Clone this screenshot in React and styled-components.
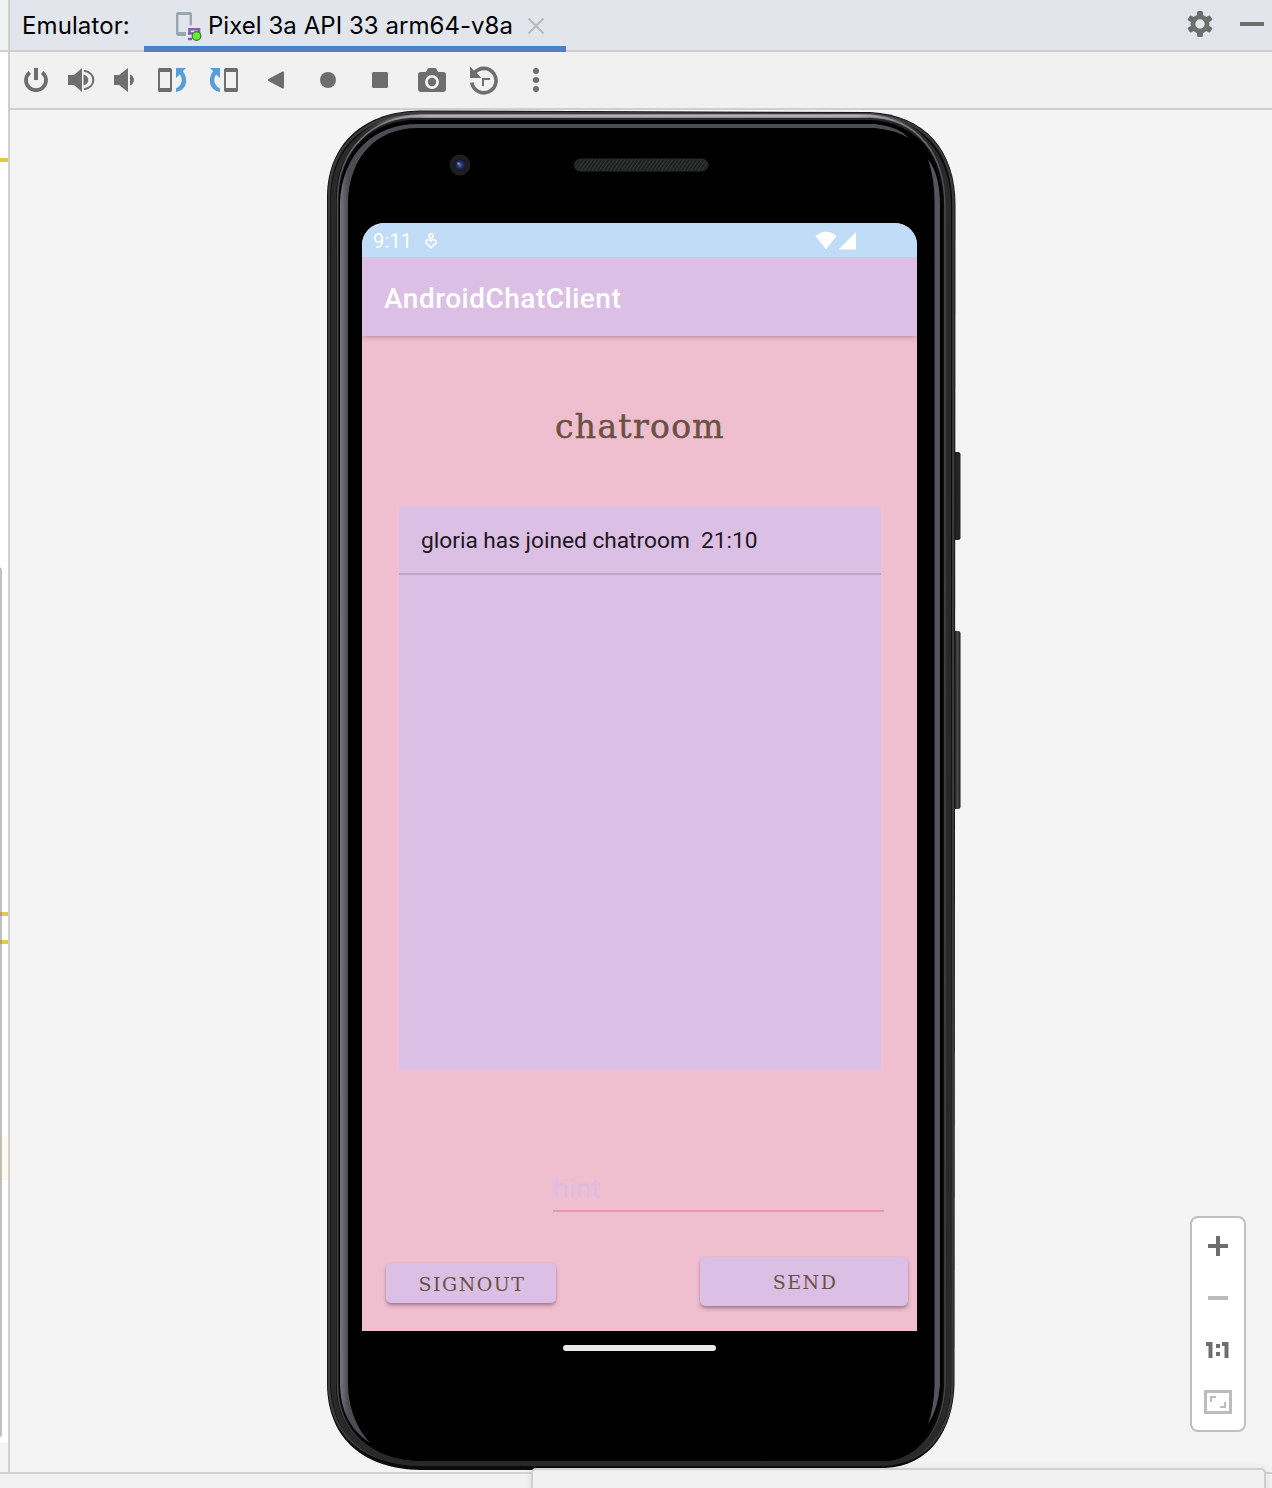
import React from "react";
import styled, { createGlobalStyle } from "styled-components";

const Global = createGlobalStyle`
  body { margin: 0; background: #f4f4f4; overflow: hidden; }
  *, *::before, *::after { box-sizing: border-box; }
  svg { display: block; }
`;

const Window = styled.div`
  position: relative;
  width: 1272px;
  height: 1488px;
  overflow: hidden;
  display: flex;
  flex-direction: column;
  background: #f4f4f4;
  font-family: Inter, "Liberation Sans", sans-serif;
`;
const Workspace = styled.div`
  display: flex;
  height: 1472px;
`;
const StatusStrip = styled.div`
  height: 16px;
  border-top: 2px solid #d1d1d1;
  background: #f2f2f2;
`;
const Popup = styled.div`
  position: absolute;
  left: 531px;
  top: 1468px;
  width: 735px;
  height: 40px;
  border: 2px solid #cfcfcf;
  border-radius: 5px;
  background: #f1f1f1;
  box-shadow: 0 0 8px rgba(0, 0, 0, 0.08);
`;

const EditorEdge = styled.div`
  position: relative;
  width: 10px;
  border-right: 2px solid #cfcfcf;
  background: #f4f4f4;
  display: flex;
  flex-direction: column;
`;
const EdgeTop = styled.div`
  height: 52px;
  border-bottom: 2px solid #cfcfcf;
  background: #f2f2f2;
`;
const EdgeGutter = styled.div`
  display: flow-root;
  height: 1391px;
  background: #fff;
`;
const Mark = styled.div`
  height: ${(p) => p.$height}px;
  margin-top: ${(p) => p.$gap}px;
  background: ${(p) => p.$color};
`;
const ScrollThumb = styled.div`
  position: absolute;
  left: -6px;
  top: 567px;
  width: 8px;
  height: 871px;
  border-radius: 4px;
  background: rgba(130, 130, 130, 0.5);
`;

const Panel = styled.div`
  flex: 1;
  display: flex;
  flex-direction: column;
`;
const Header = styled.div`
  display: flex;
  height: 52px;
  border-bottom: 2px solid #cfcfcf;
  background: #e2e6ec;
  font-size: 24px;
  line-height: 52px;
  color: #000;
  white-space: pre;
`;
const HeaderLabel = styled.div`
  width: 134px;
  padding-left: 12px;
  letter-spacing: 0.1px;
`;
const Tab = styled.div`
  display: flex;
  width: 422px;
  height: 52px;
  padding-left: 30px;
  border-bottom: 6px solid #4f7fc5;
`;
const TabIcon = styled.div`
  width: 34px;
  padding-top: 10px;
`;
const TabTitle = styled.div`
  width: 319px;
  letter-spacing: 0.04px;
`;
const TabClose = styled.div`
  padding-top: 17px;
`;
const HeaderActions = styled.div`
  display: flex;
  margin-left: auto;
  gap: 24px;
  padding: 10px 6px 0 0;
`;
const Toolbar = styled.div`
  display: flex;
  align-items: center;
  height: 58px;
  padding-left: 4px;
  border-bottom: 2px solid #cfcfcf;
  background: #f1f1f1;
`;
const ToolButton = styled.div`
  display: flex;
  justify-content: center;
  width: ${(p) => p.$width || 52}px;
`;
const Canvas = styled.div`
  flex: 1;
  display: flex;
  padding-left: 316px;
`;

const Phone = styled.div`
  position: relative;
  width: 636px;
  height: 1362px;
  padding: 113px 0 0 36px;
`;
const Shell = styled.svg`
  position: absolute;
  left: 0;
  top: 0;
`;
const Screen = styled.div`
  position: relative;
  width: 555px;
  height: 1108px;
  border-radius: 22px 22px 0 0;
  overflow: hidden;
  display: flex;
  flex-direction: column;
  background: #efbfcf;
  font-family: Roboto, "Liberation Sans", sans-serif;
`;
const StatusBar = styled.div`
  display: flex;
  align-items: center;
  height: 34px;
  padding: 1px 60px 0 11px;
  background: #c1dcf7;
  color: #fff;
  font-size: 20px;
`;
const Clock = styled.span`
  width: 51px;
  padding-top: 1px;
  letter-spacing: 0.15px;
`;
const Signals = styled.div`
  margin-left: auto;
`;
const AppBar = styled.div`
  height: 79px;
  padding: 1px 0 0 22px;
  background: #dbbfe4;
  color: #fff;
  font-size: 28px;
  font-weight: 500;
  line-height: 81px;
  letter-spacing: 0.5px;
  box-shadow: 0 1px 5px rgba(90, 40, 70, 0.38);
  clip-path: inset(0 0 -10px 0);
  z-index: 1;
`;
const Heading = styled.h1`
  margin: 66px 0 0;
  height: 104px;
  padding-left: 1px;
  font: 400 33px/50px "DejaVu Serif", serif;
  letter-spacing: 1.3px;
  -webkit-text-stroke: 0.5px #6c5044;
  text-align: center;
  color: #6c5044;
`;
const MessageList = styled.div`
  width: 482px;
  height: 564px;
  margin-left: 36.5px;
  background: #dbbfe4;
`;
const Message = styled.div`
  height: 69px;
  padding-left: 22.5px;
  border-bottom: 2px solid #bfa7c8;
  font-size: 22.7px;
  line-height: 69px;
  color: #1d1720;
  white-space: pre;
`;
const HintField = styled.div`
  width: 331px;
  height: 44px;
  margin: 98px 0 0 191px;
  border-bottom: 2px solid #e995b4;
  font-size: 28px;
  line-height: 41px;
  color: #dbbfe4;
`;
const Actions = styled.div`
  display: flex;
  align-items: center;
  justify-content: space-between;
  margin-top: 45px;
  padding: 0 9px 0 24px;
`;
const ActionButton = styled.div`
  display: flex;
  align-items: center;
  justify-content: center;
  width: ${(p) => p.$width}px;
  height: ${(p) => p.$height}px;
  margin-top: ${(p) => p.$drop || 0}px;
  padding: 1px 0 0 2px;
  border-radius: 5px;
  background: #dbbfe4;
  box-shadow: 0 3px 4px -1px rgba(80, 40, 70, 0.45), 0 1px 3px rgba(80, 40, 70, 0.15);
  font-family: "DejaVu Serif", serif;
  font-size: 19px;
  letter-spacing: 1.5px;
  color: #6c5044;
`;
const NavPill = styled.div`
  position: relative;
  width: 153px;
  height: 6px;
  margin: 14px 0 0 201px;
  border-radius: 3px;
  background: #e9e9e9;
`;

const ZoomPanel = styled.div`
  align-self: flex-end;
  display: flex;
  flex-direction: column;
  align-items: center;
  justify-content: space-around;
  width: 56px;
  height: 216px;
  margin: 0 26px 40px auto;
  padding: 2px 0;
  border: 2px solid #bfbfbf;
  border-radius: 8px;
  background: #fff;
`;
const ZoomButton = styled.div`
  display: flex;
  align-items: center;
  justify-content: center;
  height: 52px;
`;

const G = "#6e6e6e";
const Icon = ({ children, size = 32 }) => (
  <svg width={size} height={size} viewBox={`${-size / 2} ${-size / 2} ${size} ${size}`} fill={G}>
    {children}
  </svg>
);

const PowerIcon = () => (
  <Icon>
    <path d="M-6.2-7.6A10 10 0 1 0 6.2-7.6" fill="none" stroke={G} strokeWidth="3.8" />
    <rect x="-2" y="-12" width="4" height="12" />
  </Icon>
);
const VolumeUpIcon = () => (
  <Icon>
    <path d="M-13-5H-7L1-12V12L-7 5H-13ZM2.5-5.5C9-4 9 4 2.5 5.5Z" />
    <path d="M3-9.2C15.5-7.5 15.5 7.5 3 9.2" fill="none" stroke={G} strokeWidth="2" />
  </Icon>
);
const VolumeDownIcon = () => (
  <Icon>
    <path d="M-11-5H-6L3-12V12L-6 5H-11ZM5-5.5C10.300-4 10.300 4 5 5.500Z" />
  </Icon>
);
const RotateIcon = ({ right }) => (
  <Icon>
    <g transform={right ? "scale(-1 1)" : undefined}>
      <path fillRule="evenodd" d="M-12.500-12H-1.500Q0-12 0-10.500V10.500Q0 12-1.500 12H-12.500Q-14 12-14 10.500V-10.500Q-14-12-12.500-12ZM-12-8V8H-2V-8Z" />
      <path fill="#549fd7" d="M4-12H14L10.800-8.700C16.500-2 15.500 10.500 4 12V8.500C10.500 5.500 11-1.500 7.800-5.600L4-2Z" />
    </g>
  </Icon>
);
const BackIcon = () => (
  <Icon>
    <path d="M-7.200 0L7-7.500V7.500Z" stroke={G} strokeWidth="2" strokeLinejoin="round" />
  </Icon>
);
const HomeIcon = () => (
  <Icon>
    <circle r="8" />
  </Icon>
);
const OverviewIcon = () => (
  <Icon>
    <rect x="-8" y="-8" width="16" height="16" rx="1.300" />
  </Icon>
);
const CameraIcon = () => (
  <Icon>
    <path fillRule="evenodd" d="M-5-10Q-4.500-12-3-12H3Q4.500-12 5-10L6-8H11Q14-8 14-5V9Q14 12 11 12H-11Q-14 12-14 9V-5Q-14-8-11-8H-6ZM0-5A7 7 0 1 0 0 9A7 7 0 1 0 0-5Z" />
    <circle cy="2" r="4.200" />
  </Icon>
);
const HistoryIcon = () => (
  <Icon>
    <path d="M-9.300-7.500A12.200 12.200 0 1 1-12.200 2.500" fill="none" stroke={G} strokeWidth="3.600" />
    <path d="M-14-13.500V-2H-2.500Z" />
    <path d="M-2-2H6V0H0V6H-2Z" />
  </Icon>
);
const MoreIcon = () => (
  <Icon>
    <circle cy="-9" r="3" />
    <circle r="3" />
    <circle cy="9" r="3" />
  </Icon>
);
const GearIcon = () => (
  <Icon size={28}>
    {[0, 60, 120].map((a) => (
      <rect key={a} x="-3" y="-13" width="6" height="26" rx="1.500" transform={`rotate(${a})`} />
    ))}
    <circle r="7" fill="none" stroke={G} strokeWidth="5" />
    <circle r="4.700" fill="#e2e6ec" />
  </Icon>
);
const DeviceIcon = () => (
  <svg width="28" height="32" viewBox="0 0 28 32">
    <path d="M12 26H4Q2 26 2 24V4Q2 2 4 2H16Q18 2 18 4V15.500H15.500V5H4.500V22H12Z" fill="#9aa7b0" />
    <path d="M15.500 24V19.300H25V25M14 23.500H21M14 29H18" fill="none" stroke="#8160b0" strokeWidth="2.600" />
    <circle cx="22.500" cy="26" r="4.300" fill="#62f02f" stroke="#49703b" strokeWidth="1.200" />
  </svg>
);
const CareIcon = () => (
  <svg width="14" height="18" viewBox="0 0 14 18" fill="none" stroke="#fff" strokeWidth="1.700">
    <circle cx="7" cy="3.800" r="2" />
    <path d="M7 15.800L2.400 11.200C.8 8.500 4.500 6 7 9C9.500 6 13.200 8.500 11.600 11.200Z" />
  </svg>
);
const SignalIcons = () => (
  <svg width="42" height="20" viewBox="0 0 42 20" fill="#fff">
    <path d="M.5 5Q11-3.500 21.500 5L11 18.200Z" />
    <path d="M41 1V18.500H23.500Z" />
  </svg>
);

const PhoneShell = () => (
  <Shell width="636" height="1362" viewBox="326 110 636 1362" fill="none">
    <defs>
      <linearGradient id="rim" x1="0" y1="110" x2="0" y2="1470" gradientUnits="userSpaceOnUse">
        <stop offset="0" stopColor="#a4a2a6" />
        <stop offset="0.012" stopColor="#77757a" />
        <stop offset="0.05" stopColor="#505053" />
        <stop offset="0.12" stopColor="#4d4d4e" />
        <stop offset="0.95" stopColor="#454546" />
        <stop offset="1" stopColor="#202020" />
      </linearGradient>
      <linearGradient id="shine" x1="360" y1="0" x2="925" y2="0" gradientUnits="userSpaceOnUse">
        <stop offset="0" stopColor="#8a888d" stopOpacity="0" />
        <stop offset="0.12" stopColor="#b0aeb2" />
        <stop offset="0.88" stopColor="#b0aeb2" />
        <stop offset="1" stopColor="#8a888d" stopOpacity="0" />
      </linearGradient>
      <linearGradient id="bevel" x1="340" y1="0" x2="348" y2="0" gradientUnits="userSpaceOnUse">
        <stop offset="0" stopColor="#77777b" />
        <stop offset="1" stopColor="#4c4c53" />
      </linearGradient>
      <linearGradient id="key" x1="954" y1="0" x2="961" y2="0" gradientUnits="userSpaceOnUse">
        <stop offset="0" stopColor="#111" />
        <stop offset="0.5" stopColor="#4a4a48" />
        <stop offset="1" stopColor="#111" />
      </linearGradient>
      <pattern id="mesh" width="3" height="3" patternUnits="userSpaceOnUse" patternTransform="rotate(35)">
        <rect width="3" height="3" fill="#1a1c1b" />
        <rect width="1.300" height="3" fill="#363937" />
      </pattern>
      <radialGradient id="lens">
        <stop offset="0" stopColor="#5a6fa8" />
        <stop offset="0.500" stopColor="#252e5a" />
        <stop offset="1" stopColor="#12152a" />
      </radialGradient>
    </defs>
    <rect x="952" y="452" width="8.500" height="88" rx="2.500" fill="#242423" />
    <rect x="952" y="631" width="8.500" height="178" rx="2.500" fill="url(#key)" />
    <path d="M420 110.500L870 112C925 115 955.500 150 955.500 205L954.500 1385C953 1430 930 1466 885 1468L530 1470H420C365 1469 328 1440 327 1385V195C328 143 365 111 420 110.500Z" fill="#0b0b0b" />
    <path d="M420 112.500L870 114C923 117 953.500 150 953.500 205L952.500 1385C951 1430 928 1462 885 1464H420C367 1464 330 1438 329 1385V195C330 145 367 113 420 112.500Z" stroke="#3a3a3a" strokeWidth="2.500" />
    <path d="M420 117L870 118C918 120 948.500 154 948.500 207V1385C947 1426 925 1461 885 1463.500H420C370 1463 334 1435 333.500 1385V197C334 149 370 117 420 117Z" stroke="#292929" strokeWidth="5" />
    <path d="M420 116H870C918 119 945 154 945 207V1385C943 1426 923 1459 885 1461.500H420C372 1461 338 1433 337.500 1385V199C338 150 372 116 420 116Z" stroke="url(#rim)" strokeWidth="1.600" />
    <path d="M360 134C376 121 396 116 420 116H870C890 117 908 123 922 136" stroke="url(#shine)" strokeWidth="3.600" />
    <path d="M420 120H870C915 121 942.500 156 942.500 207V1385C940 1422 920 1460 885 1461H420C375 1460 339 1432 339 1385V199C341 150 375 120 420 120Z" fill="#000" />
    <path d="M340 1385V203C342 153 374 124 418 124H875Q897 126 909 138Q895 130 875 128H418C377 128 349 156 348 203V1385Q349 1420 370 1443C349 1429 341 1410 340 1385Z" fill="url(#bevel)" />
    <path d="M928 159Q940 175 940 205V1385Q938 1410 928 1424Q934 1408 934.500 1385V205Q935 180 928 159Z" fill="#55555a" />
    <circle cx="460" cy="165" r="10.500" fill="#1e1e20" />
    <circle cx="460" cy="165" r="6" fill="url(#lens)" />
    <circle cx="458.500" cy="163.500" r="1.200" fill="#7f92c5" />
    <rect x="574.500" y="159" width="133.500" height="12" rx="6" fill="url(#mesh)" stroke="#292b2a" />
  </Shell>
);

const TOOLS = [
  [PowerIcon, 44],
  [VolumeUpIcon, 46],
  [VolumeDownIcon, 42],
  [RotateIcon],
  [() => <RotateIcon right />],
  [BackIcon],
  [HomeIcon],
  [OverviewIcon],
  [CameraIcon],
  [HistoryIcon],
  [MoreIcon],
];

export default function App() {
  return (
    <Window>
      <Global />
      <Workspace>
        <EditorEdge>
          <EdgeTop />
          <EdgeGutter>
            <Mark $gap={106} $height={4} $color="#e0cb4b" />
            <Mark $gap={750} $height={4} $color="#e0cb4b" />
            <Mark $gap={24} $height={4} $color="#e0cb4b" />
            <Mark $gap={192} $height={44} $color="#fcfaed" />
          </EdgeGutter>
          <ScrollThumb />
        </EditorEdge>
        <Panel>
          <Header>
            <HeaderLabel>Emulator:</HeaderLabel>
            <Tab>
              <TabIcon>
                <DeviceIcon />
              </TabIcon>
              <TabTitle>Pixel 3a API 33 arm64-v8a</TabTitle>
              <TabClose>
                <svg width="18" height="18" viewBox="0 0 18 18" stroke="#b5b8bd" strokeWidth="1.800">
                  <path d="M1.500 1.500L16.500 16.500M16.500 1.500L1.500 16.500" />
                </svg>
              </TabClose>
            </Tab>
            <HeaderActions>
              <GearIcon />
              <svg width="28" height="28" viewBox="0 0 28 28">
                <rect x="2" y="12" width="24" height="4" fill={G} />
              </svg>
            </HeaderActions>
          </Header>
          <Toolbar>
            {TOOLS.map(([Tool, width], i) => (
              <ToolButton key={i} $width={width}>
                <Tool />
              </ToolButton>
            ))}
          </Toolbar>
          <Canvas>
            <Phone>
              <PhoneShell />
              <Screen>
                <StatusBar>
                  <Clock>9:11</Clock>
                  <CareIcon />
                  <Signals>
                    <SignalIcons />
                  </Signals>
                </StatusBar>
                <AppBar>AndroidChatClient</AppBar>
                <Heading>chatroom</Heading>
                <MessageList>
                  <Message>{"gloria has joined chatroom  21:10"}</Message>
                </MessageList>
                <HintField>hint</HintField>
                <Actions>
                  <ActionButton $width={170} $height={40} $drop={3}>
                    SIGNOUT
                  </ActionButton>
                  <ActionButton $width={208} $height={49}>
                    SEND
                  </ActionButton>
                </Actions>
              </Screen>
              <NavPill />
            </Phone>
            <ZoomPanel>
              <ZoomButton>
                <svg width="20" height="20" viewBox="0 0 20 20" fill={G}>
                  <path d="M8 0H12V8H20V12H12V20H8V12H0V8H8Z" />
                </svg>
              </ZoomButton>
              <ZoomButton>
                <svg width="20" height="4" viewBox="0 0 20 4">
                  <rect width="20" height="4" fill="#bcbcbc" />
                </svg>
              </ZoomButton>
              <ZoomButton>
                <svg width="24" height="16" viewBox="0 0 24 16" fill={G}>
                  <path d="M0 0H6.500V16H2.500V4H0ZM16 0H22.500V16H18.500V4H16ZM10 2H14V6H10ZM10 10H14V14H10Z" />
                </svg>
              </ZoomButton>
              <ZoomButton>
                <svg width="28" height="24" viewBox="0 0 28 24" fill="none" stroke="#bcbcbc">
                  <rect x="1.500" y="1.500" width="25" height="21" strokeWidth="3" />
                  <path d="M7 12V7H12M21 12V17H16" strokeWidth="2" />
                </svg>
              </ZoomButton>
            </ZoomPanel>
          </Canvas>
        </Panel>
      </Workspace>
      <StatusStrip />
      <Popup />
    </Window>
  );
}
